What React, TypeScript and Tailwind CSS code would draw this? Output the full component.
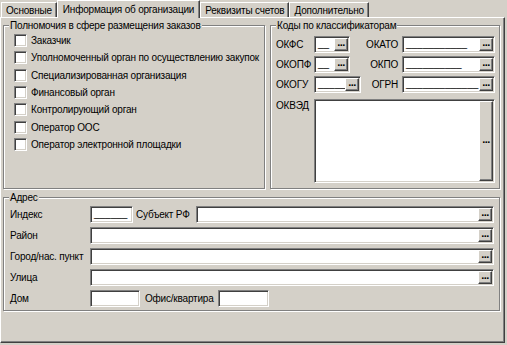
import React from "react";

const sunken =
  "bg-white border border-t-[#808080] border-l-[#808080] border-b-white border-r-white shadow-[inset_1px_1px_0_#404040,inset_-1px_-1px_0_#d4d0c8]";

const fieldset =
  "min-w-0 border border-[#808080] shadow-[1px_1px_0_#fff,inset_1px_1px_0_#fff]";

function Dots() {
  return (
    <div className="w-[14px] self-stretch flex items-center justify-center bg-[#d4d0c8] border border-t-white border-l-white border-b-[#404040] border-r-[#404040] shadow-[inset_-1px_-1px_0_#808080]">
      <span className="text-[11px] font-bold leading-none -mt-[4px] tracking-[-0.5px]">...</span>
    </div>
  );
}

function Field({
  width,
  mask,
  button = true,
}: {
  width?: string;
  mask?: string;
  button?: boolean;
}) {
  return (
    <div className={`h-[17px] flex p-px ${sunken} ${width ?? "flex-1"}`}>
      <div className="flex-1 pl-[2px] leading-[12px] overflow-hidden tracking-normal">{mask}</div>
      {button && <Dots />}
    </div>
  );
}

function Check({ label }: { label: string }) {
  return (
    <div className="h-[17.3px] flex items-center">
      <div className={`w-[13px] h-[13px] ml-[10px] mr-[4px] ${sunken}`} />
      <span>{label}</span>
    </div>
  );
}

const tabs = ["Основные", "Информация об организации", "Реквизиты счетов", "Дополнительно"];

export default function App() {
  const powers = [
    "Заказчик",
    "Уполномоченный орган по осуществлению закупок",
    "Специализированная организация",
    "Финансовый орган",
    "Контролирующий орган",
    "Оператор ООС",
    "Оператор электронной площадки",
  ];

  return (
    <div className="w-[507px] h-[345px] bg-[#d4d0c8] text-[10px] tracking-[-0.2px] text-black whitespace-nowrap font-['Liberation_Sans',Arial,sans-serif] overflow-hidden">
      <div className="h-[17px] flex items-end pl-[1px]">
        {tabs.map((t, i) =>
          i === 1 ? (
            <div
              key={t}
              className="relative z-10 h-[18px] -mb-px px-[5px] bg-[#d4d0c8] border-t border-l border-white border-r border-r-[#404040] shadow-[inset_-1px_0_0_#808080] flex items-center"
            >
              {t}
            </div>
          ) : (
            <div
              key={t}
              className="h-[15px] px-[4px] border-t border-l border-white border-r border-r-[#404040] shadow-[inset_-1px_0_0_#808080] flex items-center"
            >
              {t}
            </div>
          )
        )}
      </div>

      <div className="w-[505px] h-[326px] border border-t-white border-l-white border-r-[#404040] border-b-[#404040] shadow-[inset_-1px_-1px_0_#808080] pl-[2px] pt-[1px]">
        <div className="flex gap-[5px]">
          <fieldset className={`w-[262px] h-[170px] shrink-0 overflow-hidden ${fieldset}`}>
            <legend className="ml-[5px] px-px leading-[13px] bg-[#d4d0c8]">
              Полномочия в сфере размещения заказов
            </legend>
            {powers.map((p) => (
              <Check key={p} label={p} />
            ))}
          </fieldset>

          <fieldset className={`w-[230px] h-[170px] shrink-0 ${fieldset}`}>
            <legend className="ml-[5px] px-px leading-[13px] bg-[#d4d0c8]">
              Коды по классификаторам
            </legend>
            <div className="pt-[4px] pl-[5px] pr-[4px] flex flex-col gap-[3px]">
              <div className="flex items-center">
                <span className="w-[38px]">ОКФС</span>
                <Field width="w-[36px]" mask="__" />
                <span className="flex-1 text-right pr-[4px]">ОКАТО</span>
                <Field width="w-[93px]" mask="___________" />
              </div>
              <div className="flex items-center">
                <span className="w-[38px]">ОКОПФ</span>
                <Field width="w-[36px]" mask="__" />
                <span className="flex-1 text-right pr-[4px]">ОКПО</span>
                <Field width="w-[93px]" mask="__________" />
              </div>
              <div className="flex items-center">
                <span className="w-[38px]">ОКОГУ</span>
                <Field width="w-[47px]" mask="_____" />
                <span className="flex-1 text-right pr-[4px]">ОГРН</span>
                <Field width="w-[93px]" mask="_____________" />
              </div>
              <div className="flex items-start mt-[3px]">
                <span className="w-[38px] -mt-[1px]">ОКВЭД</span>
                <div className={`w-[182px] h-[84px] flex p-px ${sunken}`}>
                  <div className="flex-1" />
                  <Dots />
                </div>
              </div>
            </div>
          </fieldset>
        </div>

        <fieldset className={`w-[497px] h-[120px] mt-[2px] ${fieldset}`}>
          <legend className="ml-[5px] px-px leading-[13px] bg-[#d4d0c8]">Адрес</legend>
          <div className="pt-[2px] pl-[6px] pr-[5px] flex flex-col gap-[4px]">
            <div className="flex items-center">
              <span className="w-[80px]">Индекс</span>
              <Field width="w-[43px]" mask="______" button={false} />
              <span className="w-[63px] pl-[3px]">Субъект РФ</span>
              <Field />
            </div>
            <div className="flex items-center">
              <span className="w-[80px]">Район</span>
              <Field />
            </div>
            <div className="flex items-center">
              <span className="w-[80px]">Город/нас. пункт</span>
              <Field />
            </div>
            <div className="flex items-center">
              <span className="w-[80px]">Улица</span>
              <Field />
            </div>
            <div className="flex items-center">
              <span className="w-[80px]">Дом</span>
              <Field width="w-[50px]" button={false} />
              <span className="w-[78px] pl-[5px]">Офис/квартира</span>
              <Field width="w-[51px]" button={false} />
            </div>
          </div>
        </fieldset>
      </div>
    </div>
  );
}
